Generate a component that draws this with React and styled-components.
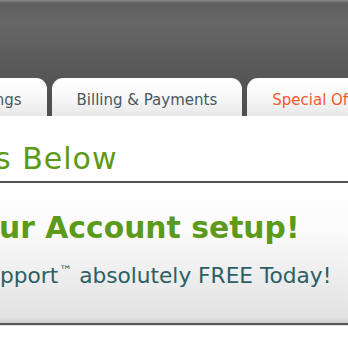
import styled, { createGlobalStyle } from 'styled-components'

const GlobalStyle = createGlobalStyle`
  html, body {
    margin: 0;
    padding: 0;
    background: #fff;
    overflow: hidden;
  }
  body {
    width: 348px;
    height: 348px;
    font-family: "DejaVu Sans", Verdana, sans-serif;
  }
`

const Page = styled.div`
  width: 348px;
  height: 348px;
  overflow: hidden;
  background: #fff;
`

const Header = styled.header`
  height: 116px;
  display: flex;
  align-items: flex-end;
  background: linear-gradient(
    #8a8a8a 0,
    #5e5e5e 3px,
    #676767 22px,
    #585858 70px,
    #4e4e4e 116px
  );
`

const Tabs = styled.nav`
  display: flex;
  gap: 5px;
  margin-left: -65px;
  white-space: nowrap;
`

const Tab = styled.a`
  display: flex;
  align-items: center;
  height: 38px;
  padding: 6px 25px 0;
  box-sizing: border-box;
  border-radius: 11px 11px 0 0;
  background: linear-gradient(#fff 0, #fbfbfb 40%, #e8e8e8 100%);
  font-size: 15px;
  text-decoration: none;
  color: ${({ $offer }) => ($offer ? '#f35a2b' : '#4b5663')};
`

const Section = styled.section`
  border-bottom: 2px solid #555;
  box-shadow: 0 1px 0 #d8d8d8;
  padding: 27px 0 6px;
`

const Title = styled.h1`
  margin: 0 0 0 -5px;
  font-size: 30px;
  line-height: 32px;
  letter-spacing: 1px;
  font-weight: 400;
  color: #5c9a16;
  white-space: nowrap;
`

const Promo = styled.div`
  height: 142px;
  box-sizing: border-box;
  padding-top: 26px;
  background: linear-gradient(#fff 0, #fafafa 35%, #e2e2e2 96%, #cfcfcf 100%);
  border-bottom: 2px solid #555;
  box-shadow: 0 1px 0 #e2e2e2;
  white-space: nowrap;
`

const Headline = styled.h2`
  margin: 0 0 0 -1px;
  font-size: 29.8px;
  line-height: 38px;
  font-weight: 700;
  color: #5b9a1a;
`

const Sub = styled.p`
  margin: 10px 0 0 0;
  font-size: 21.7px;
  line-height: 28px;
  color: #2c5e63;

  sup {
    font-size: 13px;
    vertical-align: 8px;
    margin-left: 1px;
  }
`

export default function App() {
  return (
    <>
      <GlobalStyle />
      <Page>
        <Header>
          <Tabs>
            <Tab href='#'>Settings</Tab>
            <Tab href='#'>Billing &amp; Payments</Tab>
            <Tab href='#' $offer>Special Offers</Tab>
          </Tabs>
        </Header>
        <Section>
          <Title>s Below</Title>
        </Section>
        <Promo>
          <Headline>ur Account setup!</Headline>
          <Sub>pport<sup>™</sup> absolutely FREE Today!</Sub>
        </Promo>
      </Page>
    </>
  )
}
